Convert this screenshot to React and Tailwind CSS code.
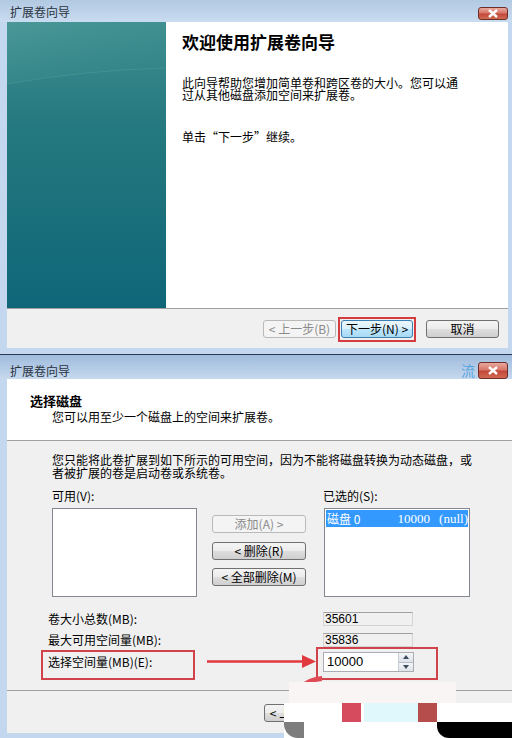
const winBtn =
  "h-[18px] flex items-center justify-center rounded-[3px] border text-[12px] leading-none";
const btnNormal =
  "border-[#707070] bg-[linear-gradient(#f4f4f4_0%,#ececec_50%,#dedede_51%,#cfcfcf_100%)] text-black";
const btnDisabled = "border-[#b9b9b9] bg-[#f4f4f4] text-[#8a8a8a]";
const btnFocus =
  "border-[#3c7fb1] bg-[linear-gradient(#eaf6fd_0%,#d9f0fc_50%,#bee6fd_51%,#a7d9f5_100%)] text-black";

function CloseButton({ h }) {
  return (
    <div
      className={`w-[30px] ${h} rounded-[3px] border border-[#6d2d28] bg-[linear-gradient(#e9a99d_0%,#d7776a_45%,#c4483a_55%,#d06a50_100%)] flex items-center justify-center`}
    >
      <svg width="12" height="9" viewBox="0 0 12 9">
        <path d="M2 1 L10 8 M10 1 L2 8" stroke="#fff" strokeWidth="2.4" />
      </svg>
    </div>
  );
}

function TealArt() {
  return (
    <svg width="159" height="286" viewBox="0 0 159 286" className="block">
      <defs>
        <linearGradient id="teal" x1="0" y1="0" x2="0" y2="1">
          <stop offset="0" stopColor="#3f8f90" />
          <stop offset="0.35" stopColor="#25797f" />
          <stop offset="1" stopColor="#0f6678" />
        </linearGradient>
        <linearGradient id="glow" x1="0" y1="0" x2="1" y2="1">
          <stop offset="0" stopColor="#5aa3a2" stopOpacity="0.45" />
          <stop offset="1" stopColor="#2f8586" stopOpacity="0.1" />
        </linearGradient>
      </defs>
      <rect width="159" height="286" fill="url(#teal)" />
      <path d="M0 0 H159 V46 Q80 48 0 62 Z" fill="url(#glow)" />
      <path d="M0 62 Q80 48 159 46" stroke="#6fb3b1" strokeOpacity="0.25" fill="none" />
    </svg>
  );
}

function WelcomeDialog() {
  return (
    <div className="h-[354px] flex flex-col bg-[#c3d8ee]">
      <div className="h-[22px] flex items-start justify-between pl-[10px] pr-[4px] bg-[linear-gradient(#b2c9e2,#c9dcf0)]">
        <span className="pt-[4px] leading-[16px] text-[12px] text-[#2a3340]">扩展卷向导</span>
        <div className="mt-[7px]">
          <CloseButton h="h-[13px]" />
        </div>
      </div>
      <div className="flex h-[286px] pl-[7px] pr-[4px]">
        <div className="w-[159px] h-full">
          <TealArt />
        </div>
        <div className="flex-1 bg-white pl-[16px] pt-[10px]">
          <div className="text-[17px] font-bold leading-[20px]">欢迎使用扩展卷向导</div>
          <p className="mt-[25px] leading-[12px]">
            此向导帮助您增加简单卷和跨区卷的大小。您可以通
            <br />
            过从其他磁盘添加空间来扩展卷。
          </p>
          <p className="mt-[30px] leading-[12px]">单击“下一步”继续。</p>
        </div>
      </div>
      <div className="h-[40px] ml-[7px] mr-[4px] bg-[#f0f0f0] border-t border-[#a0a0a0] flex justify-end pt-[11px] pr-[9px]">
        <div className={`${winBtn} ${btnDisabled} w-[73px]`}>&lt; 上一步(B)</div>
        <div className="ml-[5px] w-[72px] relative">
          <div className={`${winBtn} ${btnFocus} w-[72px]`}>下一步(N) &gt;</div>
          <div className="absolute -left-[3px] -top-[3px] w-[78px] h-[25px] border-2 border-[#d43c3f]" />
        </div>
        <div className={`${winBtn} ${btnNormal} w-[73px] ml-[13px]`}>取消</div>
      </div>
      <div className="h-[6px]" />
    </div>
  );
}

function ValueBox({ value }) {
  return (
    <div className="w-[90px] h-[14px] border border-[#d4d4d4] border-t-[#a0a0a0] bg-[#f0f0f0] pl-[1px] text-[12px] leading-[12px] font-['Liberation_Sans',sans-serif]">
      {value}
    </div>
  );
}

function SelectDiskDialog() {
  return (
    <div className="h-[383px] flex flex-col bg-[#c3d8ee]">
      <div className="h-[24px] flex items-start pl-[10px] pr-[4px] bg-[linear-gradient(#9fbbdc,#c6d9ee)]">
        <span className="pt-[8px] leading-[16px] text-[12px] text-[#2a3340]">扩展卷向导</span>
        <span className="ml-auto pt-[7px] leading-[16px] text-[14px] text-[#58a4e2] mr-[3px]">流</span>
        <div className="mt-[7px] relative">
          <CloseButton h="h-[17px]" />
        </div>
      </div>
      <div className="flex flex-1 pl-[7px]">
        <div className="flex-1 flex flex-col">
          <div className="h-[62px] bg-white border-b border-[#a0a0a0] pl-[23px] pt-[14px]">
            <div className="text-[13px] font-bold leading-[16px]">选择磁盘</div>
            <div className="mt-[2px] ml-[22px] leading-[12px]">您可以用至少一个磁盘上的空间来扩展卷。</div>
          </div>
          <div className="h-[249px] bg-[#f0f0f0] pl-[45px] pt-[12px]">
            <p className="leading-[13px] whitespace-nowrap">
              您只能将此卷扩展到如下所示的可用空间，因为不能将磁盘转换为动态磁盘，或
              <br />
              者被扩展的卷是启动卷或系统卷。
            </p>
            <div className="mt-[11px] flex leading-[12px]">
              <span className="w-[271px]">可用(V):</span>
              <span>已选的(S):</span>
            </div>
            <div className="mt-[6px] flex">
              <div className="w-[145px] h-[89px] bg-white border border-[#828790]" />
              <div className="ml-[15px] w-[94px] pt-[7px] flex flex-col">
                <div className={`${winBtn} ${btnDisabled}`}>添加(A) &gt;</div>
                <div className={`${winBtn} ${btnNormal} mt-[9px]`}>&lt; 删除(R)</div>
                <div className={`${winBtn} ${btnNormal} mt-[8px]`}>&lt; 全部删除(M)</div>
              </div>
              <div className="ml-[18px] w-[146px] h-[89px] bg-white border border-[#828790] p-px overflow-hidden">
                <div className="h-[17px] bg-[#3399ff] text-white flex items-center whitespace-nowrap leading-none">
                  <span className="w-[74px] pl-[1px]">磁盘 0</span>
                  <span className="font-['Liberation_Serif',serif] text-[13px]">10000</span>
                  <span className="ml-[9px] font-['Liberation_Serif',serif] text-[13px]">(null)</span>
                </div>
              </div>
            </div>
            <div className="mt-[15px] -ml-[4px] flex flex-col">
              <div className="flex items-center h-[14px]">
                <span className="w-[275px] leading-[12px]">卷大小总数(MB):</span>
                <ValueBox value="35601" />
              </div>
              <div className="flex items-center h-[14px] mt-[7px]">
                <span className="w-[275px] leading-[12px]">最大可用空间量(MB):</span>
                <ValueBox value="35836" />
              </div>
              <div className="flex items-center h-[20px] mt-[5px]">
                <span className="w-[275px] leading-[12px]">选择空间量(MB)(E):</span>
                <div className="w-[91px] h-[20px] bg-white border border-[#abadb3] flex">
                  <span className="flex-1 pl-[3px] leading-[18px] text-[13px] font-['Liberation_Sans',sans-serif]">10000</span>
                  <div className="w-[15px] flex flex-col border-l border-[#c9cdd3]">
                    <div className="flex-1 bg-[linear-gradient(#f4f6f8,#dde3ea)] border-b border-[#b6bcc4] flex items-center justify-center">
                      <svg width="6" height="4" viewBox="0 0 6 4"><path d="M0 4 L3 0 L6 4 Z" fill="#3d4b5c" /></svg>
                    </div>
                    <div className="flex-1 bg-[linear-gradient(#f4f6f8,#dde3ea)] flex items-center justify-center">
                      <svg width="6" height="4" viewBox="0 0 6 4"><path d="M0 0 L3 4 L6 0 Z" fill="#3d4b5c" /></svg>
                    </div>
                  </div>
                </div>
              </div>
            </div>
          </div>
          <div className="h-[43px] bg-[#f0f0f0] border-t border-[#a0a0a0] pl-[257px] pt-[13px] flex">
            <div className={`${winBtn} ${btnNormal} w-[73px]`}>&lt; 上一步(B)</div>
          </div>
          <div className="h-[5px]" />
        </div>
      </div>
    </div>
  );
}

function Annotations() {
  return (
    <>
      <div className="absolute left-[41px] top-[650px] w-[154px] h-[30px] border-2 border-[#d2424a]" />
      <div className="absolute left-[316px] top-[647px] w-[122px] h-[33px] border-2 border-[#d2424a]" />
      <svg className="absolute left-0 top-0" width="512" height="738" viewBox="0 0 512 738">
        <path d="M207 661.5 H304" stroke="#e0393e" strokeWidth="2.5" />
        <path d="M302 655 L316 661.5 L302 668 Z" fill="#e0393e" />
        <path d="M299 686 Q308 677 322 676 L322 681 Q311 682 304 686 Z" fill="#e04a55" />
      </svg>
      {/* scribble over the lower buttons */}
      <div className="absolute left-[289px] top-[682px] w-[167px] h-[21px] bg-[#faf5f5]" />
      <div className="absolute left-[284px] top-[703px] w-[228px] h-[19px] bg-white flex">
        <div className="w-[58px]" />
        <div className="w-[19px] bg-[#d64b5d]" />
        <div className="w-[3px]" />
        <div className="w-[54px] bg-[#e0f8fc]" />
        <div className="w-[19px] bg-[#b54d4c]" />
      </div>
      <div className="absolute left-[284px] top-[722px] w-[228px] h-[16px] bg-white flex">
        <div className="w-[20px] bg-[#7d7d7d] rounded-bl-[14px]" />
        <div className="w-[133px]" />
        <div className="flex-1 bg-black rounded-bl-[12px]" />
      </div>
    </>
  );
}

export default function App() {
  return (
    <div className="relative w-[512px] h-[738px] overflow-hidden bg-[#c3d8ee] font-['Noto_Sans_CJK_SC',sans-serif] text-[12px] text-black">
      <WelcomeDialog />
      <div className="h-[1px] bg-[#2a3a4e]" />
      <SelectDiskDialog />
      <Annotations />
    </div>
  );
}
